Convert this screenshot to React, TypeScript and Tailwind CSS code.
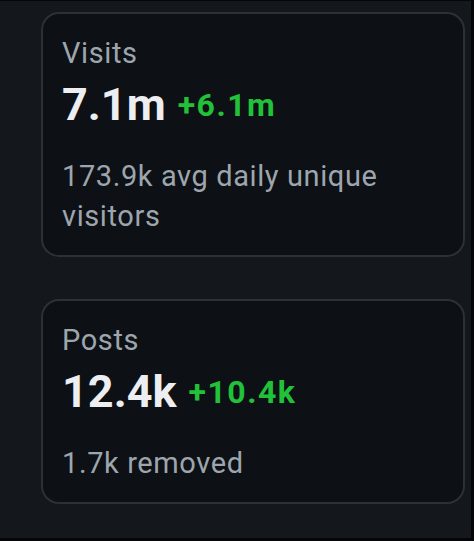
import React from "react";

type Stat = { label: string; value: string; delta: string; desc: string };

const stats: Stat[] = [
  { label: "Visits", value: "7.1m", delta: "+6.1m", desc: "173.9k avg daily unique visitors" },
  { label: "Posts", value: "12.4k", delta: "+10.4k", desc: "1.7k removed" },
];

function Card({ s }: { s: Stat }) {
  return (
    <div className="ml-[41px] w-[424px] rounded-[18px] border-2 border-[#2c3137] bg-[#0d1014] pl-[19px] pr-[19px] pt-[21px] pb-[19px]">
      <div className="text-[29px] leading-[36px] tracking-[0.6px] text-[#9da6ae]">{s.label}</div>
      <div className="mt-[4px] leading-[60px] whitespace-nowrap">
        <span className="text-[45px] font-bold text-[#eceef1]">{s.value}</span>
        <span className="ml-[12px] text-[32px] font-bold tracking-[1.5px] text-[#22c13a] align-[4px]">{s.delta}</span>
      </div>
      <div className="mt-[11px] text-[29px] leading-[40px] tracking-[0.6px] text-[#9da6ae]">{s.desc}</div>
    </div>
  );
}

export default function App() {
  return (
    <div
      className="w-[474px] h-[541px] bg-[#050607] overflow-hidden"
      style={{ fontFamily: "Roboto, 'Noto Sans', sans-serif" }}
    >
      <div className="h-[537px] w-[471px] mt-[1px] bg-[#14171b] pt-[11px] flex flex-col gap-[42px]">
        {stats.map((s) => (
          <Card key={s.label} s={s} />
        ))}
      </div>
    </div>
  );
}
